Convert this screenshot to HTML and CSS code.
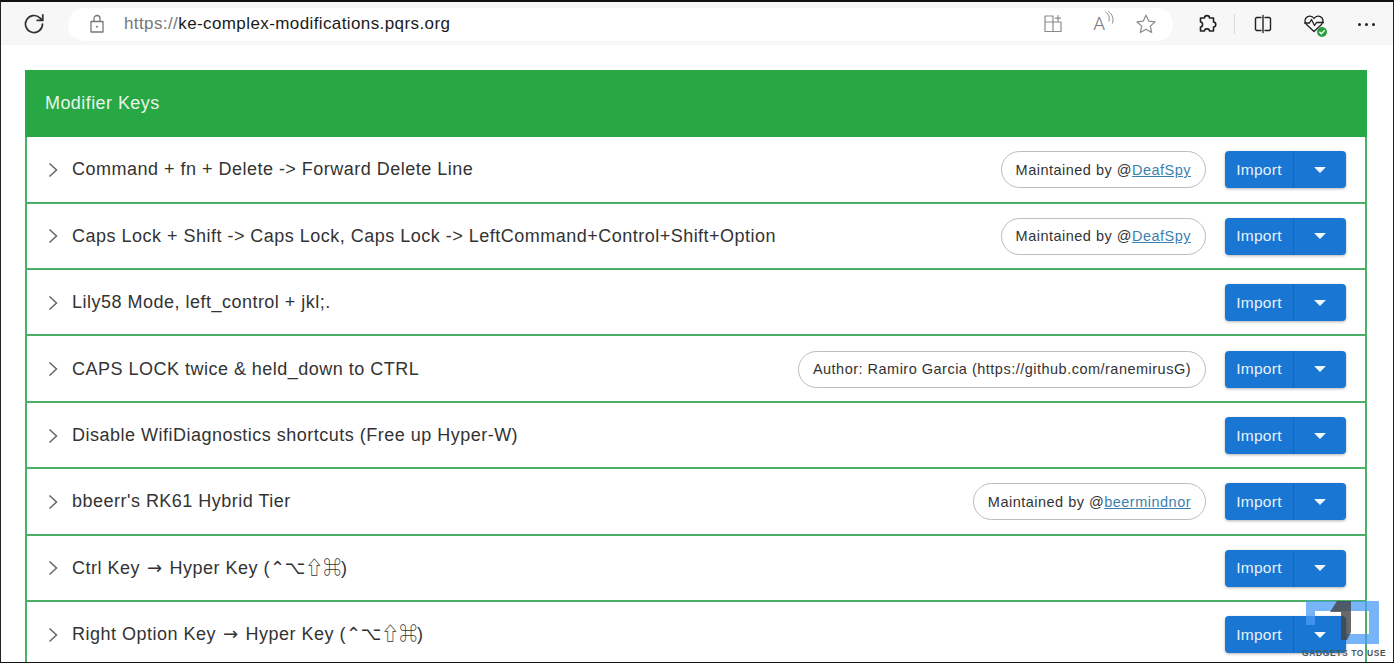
FILE: index.html
```html
<!DOCTYPE html>
<html lang="en">
<head>
<meta charset="utf-8">
<title>Modifier Keys</title>
<link rel="stylesheet" href="styles.css">
</head>
<body>
<div class="frame">
  <header class="toolbar">
    <svg class="reload" viewBox="0 0 24 24" width="24" height="24"><path d="M19.500 12a8.500 8.500 0 1 1-2.600-6.100L19.500 8.300M19.800 2.800v5.600h-5.600"/></svg>
    <div class="address">
      <svg class="lock" viewBox="0 0 16 20" width="16" height="20"><path d="M2 7.500h12v10.500H2zM5 7.500V4.500a3 3 0 0 1 6 0v3"/><circle cx="8" cy="12.700" r="1"/></svg>
      <span class="url"><span class="scheme">https://</span>ke-complex-modifications.pqrs.org</span>
      <div class="addr-icons">
        <svg class="tile" viewBox="0 0 20 20" width="20" height="20"><path d="M10 2H2v15.500h16V8H2M10 2v15.500M15 1.500v5.500M12.500 4.200h5"/></svg>
        <span class="read">A<svg viewBox="0 0 10 14" width="10" height="14"><path d="M1 1.500c3 1.500 4 5 3 8.500M3.500 .5c4 2.500 5.500 7.500 4 11.500"/></svg></span>
        <svg viewBox="0 0 22 22" width="22" height="22"><path d="M11 2.200l2.700 5.900 6.400.7-4.800 4.300 1.400 6.400-5.700-3.300-5.700 3.300 1.400-6.400L1.900 8.800l6.400-.7z"/></svg>
      </div>
    </div>
    <div class="tools">
      <svg class="t-ext" viewBox="0 0 20 20" width="20" height="20"><path d="M7.500 4c0-3.200 5-3.200 5 0h4v4c3 0 3 5 0 5v4h-4c0-2.800-5-2.800-5 0H3.500v-4c2.700 0 2.700-5 0-5V4z"/></svg>
      <span class="sep"></span>
      <svg class="t-split" viewBox="0 0 20 20" width="20" height="20"><path d="M8 3.500H3.500l-1 1v11l1 1H8M12 3.500h4.500l1 1v11l-1 1H12M10 1.500v17"/></svg>
      <span class="health">
        <svg viewBox="0 0 22 22" width="22" height="22"><path d="M11 5.500C9 2.500 5 2.500 3 5c-1.500 2-1 4.500.5 6.500l7.500 7 7.500-7c1.500-2 2-4.500.5-6.500-2-2.500-6-2.500-8 .5zM1.500 10h5l2-3.500 3 6 2-3h7"/></svg>
        <svg class="health-dot" viewBox="0 0 10 10" width="10" height="10"><circle cx="5" cy="5" r="5"/><path d="M2.800 5.200 4.400 6.800 7.300 3.600"/></svg>
      </span>
      <span class="more"><i></i><i></i><i></i></span>
    </div>
  </header>

  <main class="content">
    <section class="card">
      <h1 class="card-title">Modifier Keys</h1>

      <div class="row">
        <svg class="chev" viewBox="0 0 10 16" width="10" height="16"><path d="M1.500 1.500 8.500 8l-7 6.500"/></svg>
        <span class="row-title">Command + fn + Delete -&gt; Forward Delete Line</span>
        <span class="badge">Maintained by @<a href="#">DeafSpy</a></span>
        <span class="split"><span class="import">Import</span><span class="drop"><i></i></span></span>
      </div>
      <div class="row">
        <svg class="chev" viewBox="0 0 10 16" width="10" height="16"><path d="M1.500 1.500 8.500 8l-7 6.500"/></svg>
        <span class="row-title">Caps Lock + Shift -&gt; Caps Lock, Caps Lock -&gt; LeftCommand+Control+Shift+Option</span>
        <span class="badge">Maintained by @<a href="#">DeafSpy</a></span>
        <span class="split"><span class="import">Import</span><span class="drop"><i></i></span></span>
      </div>
      <div class="row">
        <svg class="chev" viewBox="0 0 10 16" width="10" height="16"><path d="M1.500 1.500 8.500 8l-7 6.500"/></svg>
        <span class="row-title">Lily58 Mode, left_control + jkl;.</span>
        <span class="split"><span class="import">Import</span><span class="drop"><i></i></span></span>
      </div>
      <div class="row">
        <svg class="chev" viewBox="0 0 10 16" width="10" height="16"><path d="M1.500 1.500 8.500 8l-7 6.500"/></svg>
        <span class="row-title">CAPS LOCK twice &amp; held_down to CTRL</span>
        <span class="badge">Author: Ramiro Garcia (https://github.com/ranemirusG)</span>
        <span class="split"><span class="import">Import</span><span class="drop"><i></i></span></span>
      </div>
      <div class="row">
        <svg class="chev" viewBox="0 0 10 16" width="10" height="16"><path d="M1.500 1.500 8.500 8l-7 6.500"/></svg>
        <span class="row-title">Disable WifiDiagnostics shortcuts (Free up Hyper-W)</span>
        <span class="split"><span class="import">Import</span><span class="drop"><i></i></span></span>
      </div>
      <div class="row">
        <svg class="chev" viewBox="0 0 10 16" width="10" height="16"><path d="M1.500 1.500 8.500 8l-7 6.500"/></svg>
        <span class="row-title">bbeerr's RK61 Hybrid Tier</span>
        <span class="badge">Maintained by @<a href="#">beermindnor</a></span>
        <span class="split"><span class="import">Import</span><span class="drop"><i></i></span></span>
      </div>
      <div class="row">
        <svg class="chev" viewBox="0 0 10 16" width="10" height="16"><path d="M1.500 1.500 8.500 8l-7 6.500"/></svg>
        <span class="row-title">Ctrl Key <span class="arrow">→</span> Hyper Key (<span class="keys">⌃⌥⇧⌘</span>)</span>
        <span class="split"><span class="import">Import</span><span class="drop"><i></i></span></span>
      </div>
      <div class="row">
        <svg class="chev" viewBox="0 0 10 16" width="10" height="16"><path d="M1.500 1.500 8.500 8l-7 6.500"/></svg>
        <span class="row-title">Right Option Key <span class="arrow">→</span> Hyper Key (<span class="keys">⌃⌥⇧⌘</span>)</span>
        <span class="split"><span class="import">Import</span><span class="drop"><i></i></span></span>
      </div>
    </section>
  </main>

  <div class="watermark">
    <svg viewBox="0 0 80 46" width="80" height="46"><path class="wm-blue" d="M3 2H76V45H43V35H66V12H12V26H3Z"/><path class="wm-gray" d="M27 13 34 2H48V33L44 41H38V13Z"/></svg>
    <span class="wm-text">GADGETS TO USE</span>
  </div>
</div>
</body>
</html>
```

FILE: styles.css
```css
* { box-sizing: border-box; }
html, body { margin: 0; height: 100%; overflow: hidden; background: #fff; }
body { font-family: "Liberation Sans", "DejaVu Sans", sans-serif; color: #333; }

.frame {
  position: relative;
  width: 1394px;
  height: 663px;
  overflow: hidden;
  background: #fff;
  border-top: 2px solid #111;
  border-left: 1px solid #222;
  border-right: 1px solid #222;
  border-bottom: 1px solid #111;
}

.toolbar {
  display: flex;
  align-items: center;
  height: 43px;
  padding: 1px 0 0 22px;
  background: #f7f7f7;
}
.toolbar svg { fill: none; stroke-linejoin: round; stroke-linecap: round; display: block; }
.reload { stroke: #333; stroke-width: 1.700; margin-right: 21px; }
.address {
  display: flex;
  align-items: center;
  width: 1105px;
  height: 33px;
  background: #fff;
  border-radius: 17px;
  padding: 0 16px 0 21px;
}
.lock { stroke: #777; stroke-width: 1.300; margin-right: 19px; }
.lock circle { fill: #777; stroke: none; }
.url { font-size: 17px; color: #1a1a1a; letter-spacing: .4px; }
.scheme { color: #777; }
.addr-icons { display: flex; align-items: center; gap: 24px; margin-left: auto; }
.addr-icons svg { stroke: #8a8a8a; stroke-width: 1.200; }
.tile { margin-right: 2px; }
.read { display: flex; align-items: flex-start; margin: 0 -4px 0 4px; font-family: Roboto, "Liberation Sans", sans-serif; font-weight: 300; font-size: 19px; color: #777; line-height: 22px; }
.addr-icons .read svg { margin-top: -2px; stroke-width: 1; }
.tools { display: flex; align-items: center; margin-left: 24px; }
.t-ext { stroke: #222; stroke-width: 1.600; }
.sep { width: 1px; height: 20px; background: #dcdcdc; margin: 0 18px 0 17px; }
.t-split { stroke: #222; stroke-width: 1.400; margin-right: 30px; }
.health { position: relative; display: block; width: 22px; height: 22px; margin-right: 33px; }
.health svg { stroke: #222; stroke-width: 1.300; }
.toolbar .health-dot { position: absolute; right: -2px; bottom: -2px; stroke: none; }
.health-dot circle { fill: #2e9e44; }
.toolbar .health-dot path { stroke: #fff; stroke-width: 1.300; }
.more { display: flex; gap: 4px; }
.more i { width: 3px; height: 3px; border-radius: 50%; background: #222; }

.content { padding: 25px 26px 0 24px; }
.card { border: 2px solid #4caf68; border-top: 0; border-bottom: 0; }
.card-title {
  margin: 0 -2px;
  height: 67.300px;
  padding: 0 20px;
  display: flex;
  align-items: center;
  background: #28a745;
  color: #e6f6ea;
  font-size: 18px;
  font-weight: 400;
  letter-spacing: .43px;
}
.row {
  display: flex;
  align-items: center;
  height: 66.400px;
  padding: 1px 19px 0 21px;
  border-bottom: 2px solid #4caf68;
}
.chev { fill: none; stroke: #666; stroke-width: 1.500; flex: none; margin-right: 14px; }
.row-title { font-size: 18px; color: #333; letter-spacing: .49px; white-space: nowrap; }
.arrow { font-family: "DejaVu Sans", sans-serif; font-size: 18px; line-height: 0; margin: 0 1.500px; }
.keys { font-family: "Noto Sans CJK JP", "DejaVu Sans", sans-serif; letter-spacing: -.2px; line-height: 0; }
.badge {
  margin-left: auto;
  display: flex;
  align-items: center;
  height: 37px;
  padding: 0 14px;
  border: 1px solid #bdbdbd;
  border-radius: 19px;
  font-size: 14.500px;
  color: #333;
  letter-spacing: .49px;
  white-space: nowrap;
}
.badge a { color: #3d7fae; text-decoration: underline; }
.split {
  display: flex;
  align-items: stretch;
  margin-left: 19px;
  height: 37px;
  width: 121px;
  flex: none;
  background: #1976d2;
  border-radius: 4px;
  color: #e8f2fb;
  font-size: 15.500px;
  box-shadow: 0 1px 3px rgba(0,0,0,.3);
}
.row-title + .split { margin-left: auto; }
.import { display: flex; align-items: center; justify-content: center; width: 69px; border-right: 1px solid #1565c0; letter-spacing: .3px; }
.drop { flex: 1; display: flex; align-items: center; justify-content: center; }
.drop i { width: 0; height: 0; border-left: 6px solid transparent; border-right: 6px solid transparent; border-top: 6px solid #f2f7fc; border-radius: 1px; }

.watermark {
  position: absolute;
  left: 1302px;
  top: 597px;
  width: 80px;
  height: 60px;
}
.watermark svg { display: block; }
.wm-blue { fill: #4b9bf5; opacity: .75; }
.wm-gray { fill: #444; opacity: .8; }
.wm-text {
  position: absolute;
  left: -1px;
  top: 49px;
  font-size: 8.500px;
  font-weight: 700;
  letter-spacing: .6px;
  color: #4a5560;
  white-space: nowrap;
}
```
